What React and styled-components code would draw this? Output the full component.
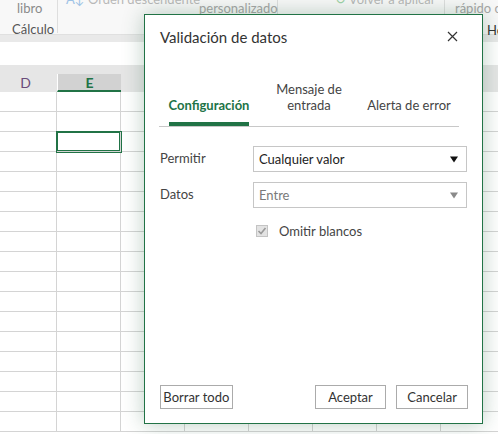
import React from 'react';
import styled, { createGlobalStyle } from 'styled-components';

const GlobalStyle = createGlobalStyle`
  html, body {
    margin: 0;
    padding: 0;
    background: #ffffff;
  }
  body {
    font-family: Lato, "Noto Sans", sans-serif;
    overflow: hidden;
  }
`;

const Page = styled.div`
  position: relative;
  width: 498px;
  height: 434px;
  overflow: hidden;
  background: #ffffff;
`;

const Ribbon = styled.div`
  display: flex;
  height: 34px;
  background: #f8f8f8;
  border-bottom: 1px solid #e0e0e0;
`;

const RibbonGroup = styled.div`
  position: relative;
  width: ${p => p.w}px;
  flex-shrink: 0;
  box-sizing: border-box;
  border-right: ${p => (p.last ? 'none' : '1px solid #dedede')};
  height: 33px;
  font-size: 13px;
  color: #a6a6a6;
`;

const RibbonText = styled.div`
  position: absolute;
  left: ${p => p.x}px;
  top: ${p => p.y}px;
  color: ${p => p.color || '#a6a6a6'};
  white-space: nowrap;
  line-height: 16px;
`;

const GrayStrip = styled.div`
  height: 7px;
  background: #e9e9e9;
`;

const FormulaArea = styled.div`
  height: 23px;
  background: #ffffff;
`;

const Sheet = styled.div`
  display: grid;
  grid-template-columns: repeat(9, 64px);
  margin-left: -7px;
`;

const HeaderCell = styled.div`
  height: 27px;
  background: #e6e6e6;
  box-sizing: border-box;
  display: flex;
  align-items: flex-end;
`;

const HeaderLabel = styled.div`
  flex: 1;
  height: 18px;
  box-sizing: border-box;
  display: flex;
  align-items: center;
  justify-content: center;
  font-size: 14px;
  font-weight: ${p => (p.active ? 700 : 400)};
  color: ${p => (p.active ? '#217346' : '#6a4b7a')};
  background: ${p => (p.active ? '#d2d2d2' : 'transparent')};
  border-left: 1px solid ${p => (p.active ? '#ffffff' : 'transparent')};
  border-right: 1px solid ${p => (p.active ? '#ffffff' : 'transparent')};
  border-bottom: 2px solid ${p => (p.active ? '#217346' : 'transparent')};
  margin-right: -1px;
  padding-top: 1px;
`;

const Cell = styled.div`
  height: 20px;
  box-sizing: border-box;
  border-right: 1px solid #d4d4d4;
  border-bottom: 1px solid #d4d4d4;
  background: #ffffff;
  box-shadow: ${p => (p.selected ? '0 0 0 1px #217346, inset 0 0 0 1px #217346' : 'none')};
  position: relative;
  z-index: ${p => (p.selected ? 1 : 0)};
`;

const Dialog = styled.div`
  position: absolute;
  left: 144px;
  top: 14px;
  width: 339px;
  height: 410px;
  box-sizing: border-box;
  background: #ffffff;
  border: 1px solid #217346;
  box-shadow: 0 0 20px rgba(30, 90, 55, 0.3);
  z-index: 5;
  display: flex;
  flex-direction: column;
  padding: 0 14px 14px 14px;
  color: #444444;
  font-size: 13px;
`;

const DialogHeader = styled.div`
  display: flex;
  align-items: center;
  justify-content: space-between;
  height: 42px;
`;

const Title = styled.div`
  font-size: 15px;
  color: #333333;
  margin-left: 1px;
  margin-top: 1px;
`;

const CloseButton = styled.div`
  width: 14px;
  height: 14px;
  display: flex;
  align-items: center;
  justify-content: center;
  margin-right: 9px;
`;

const Tabs = styled.div`
  display: flex;
  align-items: flex-end;
  width: 300px;
  margin-top: 24px;
  border-bottom: 1px solid #c8c8c8;
`;

const Tab = styled.div`
  width: 100px;
  display: flex;
  justify-content: center;
`;

const TabLabel = styled.div`
  text-align: center;
  line-height: 16px;
  padding-bottom: 9px;
  font-weight: ${p => (p.active ? 700 : 400)};
  color: ${p => (p.active ? '#217346' : '#444444')};
  border-bottom: 4px solid ${p => (p.active ? '#217346' : 'transparent')};
`;

const Form = styled.div`
  display: flex;
  flex-direction: column;
  gap: 10px;
  margin-top: 19px;
`;

const FormRow = styled.div`
  display: flex;
  align-items: center;
  height: 26px;
`;

const Label = styled.div`
  width: 94px;
  padding-left: 1px;
  box-sizing: border-box;
  color: #444444;
  margin-top: -2px;
`;

const Select = styled.div`
  width: 214px;
  height: 26px;
  box-sizing: border-box;
  border: 1px solid #c6c6c6;
  display: flex;
  align-items: center;
  justify-content: space-between;
  padding: 0 8px 0 5px;
  color: ${p => (p.disabled ? '#7a7a7a' : '#222222')};
`;

const Arrow = styled.svg`
  width: 8px;
  height: 8px;
  fill: ${p => (p.disabled ? '#8a8a8a' : '#111111')};
`;

const CheckRow = styled.div`
  display: flex;
  align-items: center;
  height: 16px;
  margin-left: 97px;
  margin-top: 15px;
  gap: 11px;
  color: #444444;
`;

const CheckBox = styled.div`
  width: 12px;
  height: 12px;
  box-sizing: border-box;
  border: 1px solid #c4c4c4;
  background: #e3e3e3;
  display: flex;
  align-items: center;
  justify-content: center;
`;

const Spacer = styled.div`
  flex: 1;
`;

const Footer = styled.div`
  display: flex;
  align-items: center;
  gap: 10px;
  padding-left: 1px;
`;

const Button = styled.div`
  height: 24px;
  width: ${p => p.w}px;
  box-sizing: border-box;
  border: 1px solid #ababab;
  background: #ffffff;
  display: flex;
  align-items: center;
  justify-content: center;
  color: #333333;
  margin-left: ${p => p.ml || 0}px;
`;

const ROWS = 17;
const COLS = 9;

export default function App() {
  const rows = [];
  for (let r = 0; r < ROWS; r++) {
    for (let c = 0; c < COLS; c++) {
      rows.push(<Cell key={r + '-' + c} selected={r === 2 && c === 1} />);
    }
  }

  return (
    <Page>
      <GlobalStyle />
      <Ribbon>
        <RibbonGroup w={58}>
          <RibbonText x={17} y={0} color="#8a8a8a">libro</RibbonText>
          <RibbonText x={12} y={21} color="#555555">Cálculo</RibbonText>
        </RibbonGroup>
        <RibbonGroup w={220}>
          <RibbonText x={8} y={-9} color="#b8b8b8">
            <span style={{ color: '#9fc3e6' }}>A↓</span> Orden descendente
          </RibbonText>
          <RibbonText x={141} y={0}>personalizado</RibbonText>
        </RibbonGroup>
        <RibbonGroup w={167}>
          <RibbonText x={57} y={-9} color="#b8b8b8">
            <span style={{ color: '#9fd3a8' }}>↻</span> Volver a aplicar
          </RibbonText>
        </RibbonGroup>
        <RibbonGroup w={60} last>
          <RibbonText x={10} y={0}>rápido c</RibbonText>
          <RibbonText x={42} y={22} color="#333333">He</RibbonText>
        </RibbonGroup>
      </Ribbon>
      <GrayStrip />
      <FormulaArea />
      <Sheet>
        {Array.from({ length: COLS }).map((_, i) => (
          <HeaderCell key={'h' + i}>
            <HeaderLabel active={i === 1}>{i === 0 ? 'D' : i === 1 ? 'E' : String.fromCharCode(69 + i)}</HeaderLabel>
          </HeaderCell>
        ))}
        {rows}
      </Sheet>

      <Dialog>
        <DialogHeader>
          <Title>Validación de datos</Title>
          <CloseButton>
            <svg width="11" height="11" viewBox="0 0 11 11">
              <path d="M1 1 L10 10 M10 1 L1 10" stroke="#333" strokeWidth="1.2" fill="none" />
            </svg>
          </CloseButton>
        </DialogHeader>

        <Tabs>
          <Tab><TabLabel active>Configuración</TabLabel></Tab>
          <Tab><TabLabel>Mensaje de<br />entrada</TabLabel></Tab>
          <Tab><TabLabel>Alerta de error</TabLabel></Tab>
        </Tabs>

        <Form>
          <FormRow>
            <Label>Permitir</Label>
            <Select>
              <span>Cualquier valor</span>
              <Arrow viewBox="0 0 8 8"><path d="M0 1.5 H8 L4 7.5 Z" /></Arrow>
            </Select>
          </FormRow>
          <FormRow>
            <Label>Datos</Label>
            <Select disabled>
              <span>Entre</span>
              <Arrow disabled viewBox="0 0 8 8"><path d="M0 1.5 H8 L4 7.5 Z" /></Arrow>
            </Select>
          </FormRow>
        </Form>

        <CheckRow>
          <CheckBox>
            <svg width="10" height="10" viewBox="0 0 10 10">
              <path d="M1.5 5 L4 7.5 L8.5 2" stroke="#9a9a9a" strokeWidth="1.6" fill="none" />
            </svg>
          </CheckBox>
          <span>Omitir blancos</span>
        </CheckRow>

        <Spacer />

        <Footer>
          <Button w={73}>Borrar todo</Button>
          <Button w={72} ml={72}>Aceptar</Button>
          <Button w={72}>Cancelar</Button>
        </Footer>
      </Dialog>
    </Page>
  );
}
